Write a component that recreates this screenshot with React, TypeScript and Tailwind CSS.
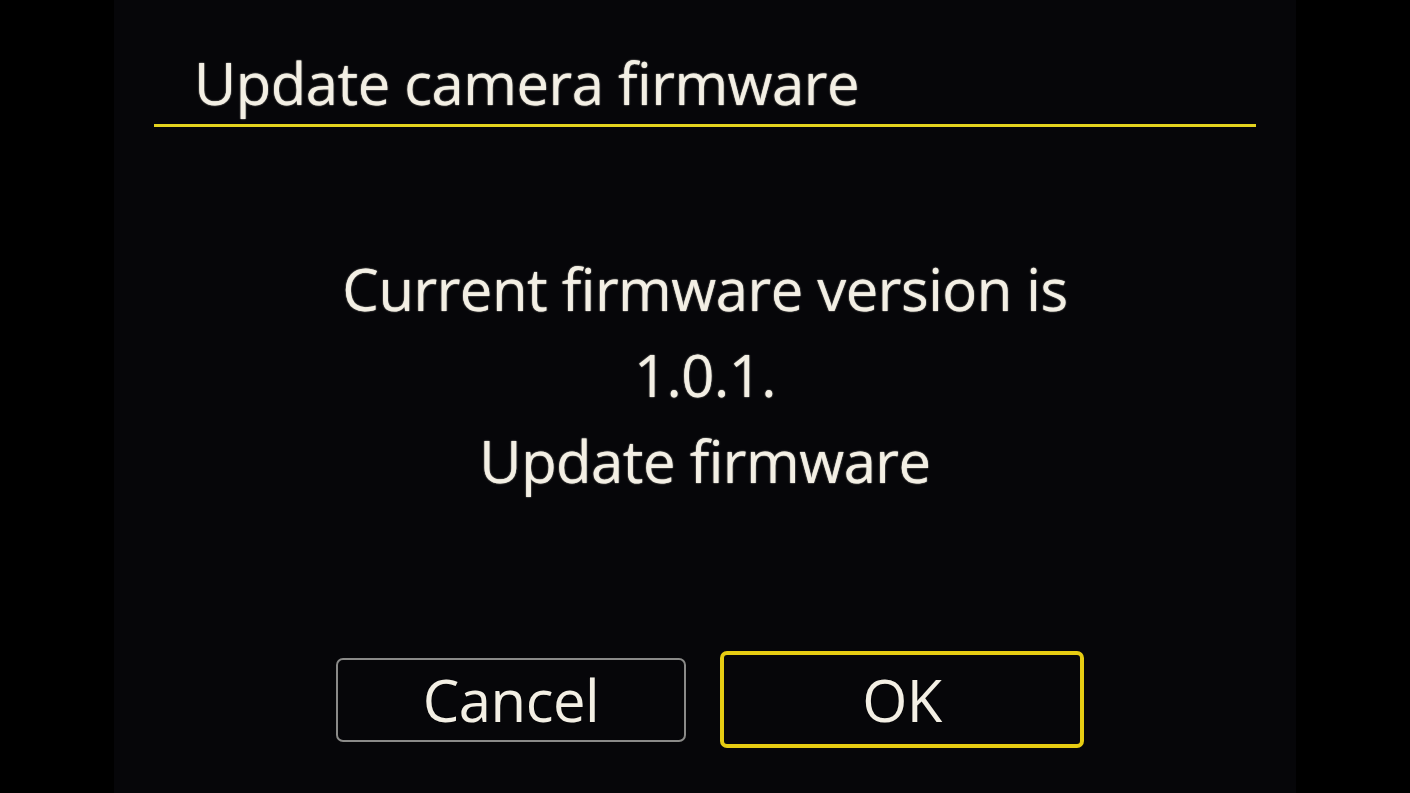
import React from 'react';

export default function App() {
    return (
        <div className="w-[1410px] h-[793px] bg-black flex justify-center overflow-hidden" style={{ fontFamily: '"Open Sans", "Noto Sans", sans-serif' }}>
            {/* LCD panel */}
            <div className="w-[1182px] h-full bg-[#060609] flex flex-col [text-shadow:0_0_1.5px_#f3efe4]">
                {/* Header */}
                <div className="mx-[40px] pt-[46px] pb-[4px] border-b-[3px] border-[#e3d21e]">
                    <h1 className="pl-[40px] text-[#f3efe4] text-[58px] font-medium leading-[74px] tracking-[-0.5px]">Update camera firmware</h1>
                </div>

                {/* Message */}
                <div className="mt-[119px] flex flex-col items-center text-[#f3efe4] text-[58px] font-medium leading-[86px] tracking-[-0.5px]">
                    <span>Current firmware version is</span>
                    <span>1.0.1.</span>
                    <span>Update firmware</span>
                </div>

                {/* Buttons */}
                <div className="mt-auto mb-[45px] flex items-center justify-center gap-[34px] pl-[10px]">
                    <button className="w-[350px] h-[84px] border-2 border-[#8a8a88] rounded-[7px] text-[#f3efe4] text-[58px] font-medium leading-none tracking-[-0.5px]">Cancel</button>
                    <button className="w-[364px] h-[97px] border-[4px] border-[#e6cc12] rounded-[7px] text-[#f3efe4] text-[58px] font-medium leading-none tracking-[-0.5px]">OK</button>
                </div>
            </div>
        </div>
    );
}
